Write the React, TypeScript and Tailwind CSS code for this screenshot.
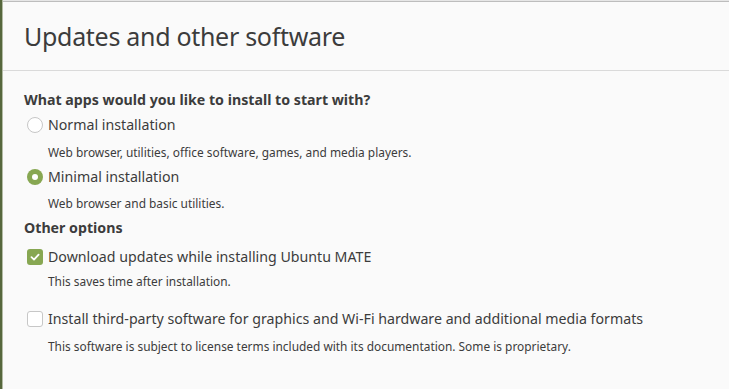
import React from "react";

const font = { fontFamily: '"Noto Sans", "Open Sans", sans-serif' };

function Radio({ checked }: { checked?: boolean }) {
  return checked ? (
    <span className="flex h-[16px] w-[16px] items-center justify-center rounded-full bg-[#87a752]">
      <span className="h-[6px] w-[6px] rounded-full bg-white" />
    </span>
  ) : (
    <span className="h-[16px] w-[16px] rounded-full border border-[#c7c7c7] bg-white" />
  );
}

function Check({ checked }: { checked?: boolean }) {
  return checked ? (
    <span className="flex h-[16px] w-[16px] items-center justify-center rounded-[3px] bg-[#87a752]">
      <svg width="12" height="12" viewBox="0 0 12 12">
        <path d="M2.5 6.2 L5 8.6 L9.6 3.6" fill="none" stroke="white" strokeWidth="1.8" strokeLinecap="round" strokeLinejoin="round" />
      </svg>
    </span>
  ) : (
    <span className="h-[16px] w-[16px] rounded-[3px] border border-[#c7c7c7] bg-white" />
  );
}

export default function App() {
  return (
    <div className="flex h-[389px] w-[729px] bg-[#fafafa] text-[#3c3c3c]" style={font}>
      <div className="w-[2px] bg-[#56673d]" />
      <div className="w-px bg-[#b3bba5]" />
      <div className="flex flex-1 flex-col">
        <div className="h-px bg-[#e6e6e6]" />
        <div className="h-px bg-[#bdbdbd]" />
        <div className="flex h-[68px] items-center pl-[21px]">
          <h1 className="text-[25px] leading-none tracking-[-0.3px] text-[#3c3c3c]">Updates and other software</h1>
        </div>
        <div className="h-px bg-[#dadada]" />
        <div className="flex flex-col pl-[21px] pt-[21px]">
          <div className="flex h-[17px] items-center text-[14.2px] font-bold leading-none text-[#3c3c3c]">
            What apps would you like to install to start with?
          </div>
          <div className="mt-[5px] flex h-[22px] items-center gap-[5px] pl-[3px]">
            <Radio />
            <span className="text-[14.2px] leading-none">Normal installation</span>
          </div>
          <div className="mt-[10px] flex h-[14px] items-center pl-[24px] text-[11.9px] leading-none">
            Web browser, utilities, office software, games, and media players.
          </div>
          <div className="mt-[6px] flex h-[22px] items-center gap-[5px] pl-[3px]">
            <Radio checked />
            <span className="text-[14.2px] leading-none">Minimal installation</span>
          </div>
          <div className="mt-[9px] flex h-[14px] items-center pl-[24px] text-[11.9px] leading-none">
            Web browser and basic utilities.
          </div>
          <div className="mt-[9px] flex h-[17px] items-center text-[14.2px] font-bold leading-none">
            Other options
          </div>
          <div className="mt-[9px] flex h-[22px] items-center gap-[5px] pl-[3px]">
            <Check checked />
            <span className="text-[14.2px] leading-none">Download updates while installing Ubuntu MATE</span>
          </div>
          <div className="mt-[7px] flex h-[14px] items-center pl-[24px] text-[11.9px] leading-none">
            This saves time after installation.
          </div>
          <div className="mt-[19px] flex h-[22px] items-center gap-[5px] pl-[3px]">
            <Check />
            <span className="text-[14.2px] leading-none">Install third-party software for graphics and Wi-Fi hardware and additional media formats</span>
          </div>
          <div className="mt-[10px] flex h-[14px] items-center pl-[24px] text-[11.9px] leading-none">
            This software is subject to license terms included with its documentation. Some is proprietary.
          </div>
        </div>
      </div>
    </div>
  );
}
